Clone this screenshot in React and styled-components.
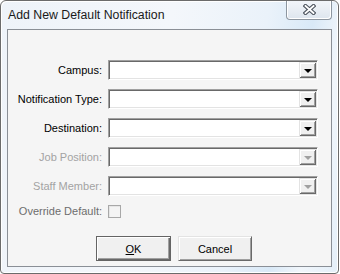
import React from 'react';
import styled, { createGlobalStyle } from 'styled-components';

const GlobalStyle = createGlobalStyle`
  html, body {
    margin: 0;
    padding: 0;
    background: #ffffff;
  }
  body {
    font-family: "Liberation Sans", Arial, sans-serif;
  }
`;

const Window = styled.div`
  box-sizing: border-box;
  width: 339px;
  height: 274px;
  border: 1px solid #6b6b6b;
  border-radius: 6px 6px 4px 4px;
  box-shadow: inset 1px 1px 0 #ffffff, inset -1px -1px 0 #ffffff;
  background: linear-gradient(
    100deg,
    #eef3f9 0%,
    #f4f7fb 45%,
    #eaf2fa 70%,
    #d9e9f7 82%,
    #f1f6fb 90%,
    #e4eff9 100%
  );
  display: flex;
  flex-direction: column;
  overflow: hidden;
`;

const TitleBar = styled.div`
  height: 28px;
  display: flex;
  align-items: flex-start;
  justify-content: space-between;
`;

const Title = styled.div`
  margin: 7px 0 0 7px;
  font-size: 12.3px;
  line-height: 14px;
  color: #1a1a1a;
`;

const CloseButton = styled.div`
  box-sizing: border-box;
  width: 46px;
  height: 20px;
  margin: -1px 6px 0 0;
  border: 1px solid #8d96a0;
  border-top: none;
  border-radius: 0 0 4px 4px;
  background: linear-gradient(180deg, #f3f6fa 0%, #e9eef4 50%, #dde5ee 100%);
  box-shadow: inset 1px 0 0 #ffffff, inset -1px -1px 0 #ffffff;
  display: flex;
  align-items: center;
  justify-content: center;
  padding-bottom: 1px;
`;

const Client = styled.div`
  box-sizing: border-box;
  height: 238px;
  margin: 0 6px;
  border: 1px solid #8a8f96;
  background: #f5f5f5;
  padding: 30px 13px 0 0;
  display: flex;
  flex-direction: column;
`;

const Form = styled.div`
  display: grid;
  grid-template-columns: 94px 210px;
  grid-auto-rows: 20px;
  column-gap: 6px;
  row-gap: 9px;
  align-items: center;
`;

const Label = styled.div`
  text-align: right;
  font-size: 11px;
  line-height: 13px;
  color: ${p => (p.$disabled ? '#a3a3a3' : p.$muted ? '#6d6d6d' : '#000000')};
  white-space: nowrap;
  align-self: ${p => (p.$top ? 'start' : 'center')};
`;

const Combo = styled.div`
  box-sizing: border-box;
  height: 20px;
  border-top: 1px solid #a0a0a0;
  border-left: 1px solid #a0a0a0;
  border-bottom: 1px solid #ffffff;
  border-right: 1px solid #ffffff;
  box-shadow: inset 1px 1px 0 #696969, inset -1px -1px 0 #e3e3e3;
  background: #ffffff;
  display: flex;
  justify-content: flex-end;
  padding: 1px;
`;

const DropButton = styled.div`
  box-sizing: border-box;
  width: 17px;
  height: 16px;
  background: #f0f0f0;
  box-shadow: inset 1px 1px 0 #e3e3e3, inset -1px -1px 0 #696969,
    inset 2px 2px 0 #ffffff, inset -2px -2px 0 #a0a0a0;
  display: flex;
  align-items: center;
  justify-content: center;
  &::after {
    content: '';
    width: 0;
    height: 0;
    margin-top: 1px;
    border-left: 4px solid transparent;
    border-right: 4px solid transparent;
    border-top: 4px solid ${p => (p.$disabled ? '#a0a0a0' : '#000000')};
  }
`;

const CheckRow = styled.div`
  height: 13px;
  align-self: start;
  display: flex;
  align-items: center;
`;

const CheckBox = styled.div`
  box-sizing: border-box;
  width: 13px;
  height: 13px;
  border: 1px solid #a8a8a8;
  background: #f4f4f4;
  box-shadow: inset 1px 1px 0 #e6e6e6;
`;

const Buttons = styled.div`
  display: flex;
  gap: 7px;
  margin: 11px 0 0 88px;
`;

const Button = styled.div`
  box-sizing: border-box;
  width: ${p => p.$width}px;
  height: 25px;
  font-size: 11px;
  color: #000000;
  background: #f0f0f0;
  display: flex;
  align-items: center;
  justify-content: center;
  border: 1px solid;
  border-color: ${p => (p.$default ? '#646464' : '#e3e3e3 #696969 #696969 #e3e3e3')};
  box-shadow: ${p =>
    p.$default
      ? 'inset 1px 1px 0 #ffffff, inset -1px -1px 0 #696969, inset -2px -2px 0 #a0a0a0'
      : 'inset 1px 1px 0 #ffffff, inset -1px -1px 0 #a0a0a0'};
  u {
    text-decoration: underline;
  }
`;

const CloseGlyph = () => (
  <svg width="13" height="11" viewBox="0 0 13 11">
    <path d="M2.5 2 L10.5 9 M10.5 2 L2.5 9" stroke="#4f5660" strokeWidth="4" strokeLinecap="square" fill="none" />
    <path d="M2.5 2 L10.5 9 M10.5 2 L2.5 9" stroke="#ffffff" strokeWidth="1.8" strokeLinecap="square" fill="none" />
  </svg>
);

const fields = [
  { label: 'Campus:' },
  { label: 'Notification Type:' },
  { label: 'Destination:' },
  { label: 'Job Position:', disabled: true },
  { label: 'Staff Member:', disabled: true },
];

const App = () => (
  <>
    <GlobalStyle />
    <Window>
      <TitleBar>
        <Title>Add New Default Notification</Title>
        <CloseButton>
          <CloseGlyph />
        </CloseButton>
      </TitleBar>
      <Client>
        <Form>
          {fields.map(f => (
            <React.Fragment key={f.label}>
              <Label $disabled={f.disabled}>{f.label}</Label>
              <Combo>
                <DropButton $disabled={f.disabled} />
              </Combo>
            </React.Fragment>
          ))}
          <Label $muted $top>Override Default:</Label>
          <CheckRow>
            <CheckBox />
          </CheckRow>
        </Form>
        <Buttons>
          <Button $default $width={75}>
            <span><u>O</u>K</span>
          </Button>
          <Button $width={74}>Cancel</Button>
        </Buttons>
      </Client>
    </Window>
  </>
);

export default App;
